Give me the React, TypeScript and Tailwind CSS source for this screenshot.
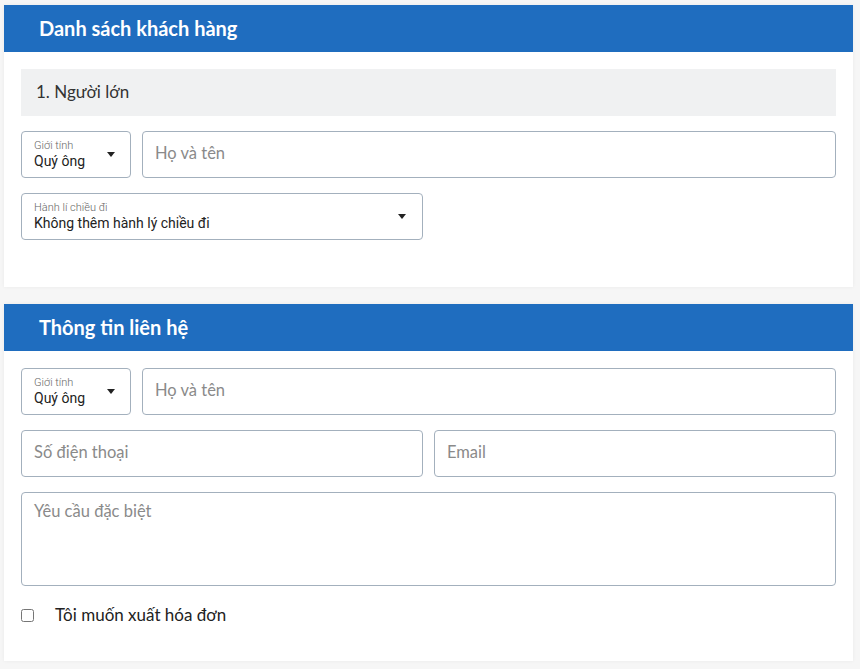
const body = { fontFamily: "Lato, 'Noto Sans', sans-serif" };
const roboto = { fontFamily: "Roboto, 'Noto Sans', sans-serif" };

function Caret() {
  return (
    <svg width="8" height="5" viewBox="0 0 8 5" className="shrink-0">
      <path d="M0 0h8L4 5z" fill="#222" />
    </svg>
  );
}

function SelectBox({ label, value, className }: { label: string; value: string; className: string }) {
  return (
    <div className={`h-[47px] border border-[#a3b0bd] rounded-[4px] pl-[12px] flex items-center ${className}`} style={roboto}>
      <div className="flex-1 flex flex-col leading-none -mt-[2px]">
        <span className="text-[11px] font-light text-[#666]">{label}</span>
        <span className="text-[14px] text-[#222] mt-[3px]">{value}</span>
      </div>
      <Caret />
    </div>
  );
}

function TextBox({ placeholder, className = "" }: { placeholder: string; className?: string }) {
  return (
    <input
      placeholder={placeholder}
      className={`h-[47px] border border-[#a3b0bd] rounded-[4px] px-[12px] pb-[3px] text-[16.5px] text-[#333] placeholder:text-[#8a8a8a] outline-none ${className}`}
      style={body}
    />
  );
}

function Card({ title, children, className = "" }: { title: string; children: React.ReactNode; className?: string }) {
  return (
    <div className={`ml-[4px] w-[849px] bg-white shadow-[0_0_4px_rgba(0,0,0,0.05)] ${className}`}>
      <div className="h-[47px] bg-[#1f6dbf] px-[35px] pb-[2px] flex items-center text-white text-[20px] font-bold" style={body}>
        {title}
      </div>
      {children}
    </div>
  );
}

export default function App() {
  return (
    <div className="min-h-[669px] bg-[#f6f6f6] pt-[5px] pb-[8px]" style={body}>
      <Card title="Danh sách khách hàng">
        <div className="px-[17px] pt-[17px] pb-[47px]">
          <div className="h-[47px] bg-[#f0f1f2] px-[15px] pb-[2px] flex items-center text-[17px] text-[#333]">1. Người lớn</div>
          <div className="mt-[15px] flex gap-[11px]">
            <SelectBox label="Giới tính" value="Quý ông" className="w-[110px] pr-[15px]" />
            <TextBox placeholder="Họ và tên" className="flex-1" />
          </div>
          <SelectBox label="Hành lí chiều đi" value="Không thêm hành lý chiều đi" className="mt-[15px] w-[402px] pr-[16px]" />
        </div>
      </Card>

      <Card title="Thông tin liên hệ" className="mt-[17px]">
        <div className="px-[17px] pt-[17px] pb-[32px]">
          <div className="flex gap-[11px]">
            <SelectBox label="Giới tính" value="Quý ông" className="w-[110px] pr-[15px]" />
            <TextBox placeholder="Họ và tên" className="flex-1" />
          </div>
          <div className="mt-[15px] grid grid-cols-2 gap-[11px]">
            <TextBox placeholder="Số điện thoại" className="w-full" />
            <TextBox placeholder="Email" className="w-full" />
          </div>
          <textarea
            placeholder="Yêu cầu đặc biệt"
            className="mt-[15px] block w-full h-[94px] resize-none border border-[#a3b0bd] rounded-[4px] px-[12px] py-[6px] text-[16.5px] text-[#333] placeholder:text-[#8a8a8a] outline-none"
            style={body}
          />
          <label className="mt-[15px] h-[28px] flex items-center">
            <input type="checkbox" className="w-[13px] h-[13px] m-0" />
            <span className="ml-[21px] text-[17px] text-[#222]">Tôi muốn xuất hóa đơn</span>
          </label>
        </div>
      </Card>
    </div>
  );
}
